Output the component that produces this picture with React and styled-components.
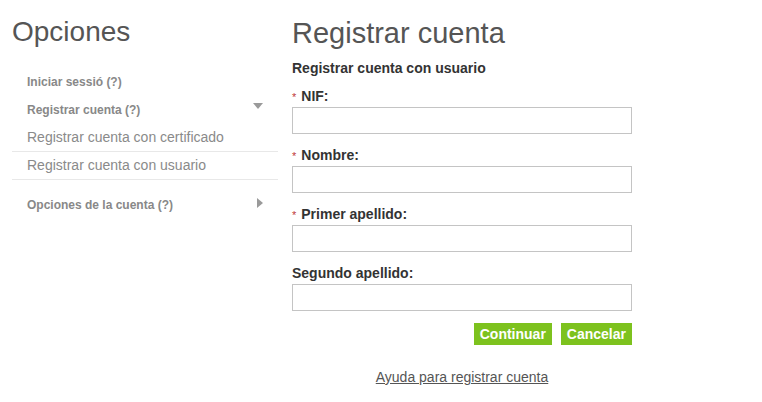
import React from "react";
import styled, { createGlobalStyle } from "styled-components";

const GlobalStyle = createGlobalStyle`
  body {
    margin: 0;
    background: #ffffff;
    font-family: "Liberation Sans", Arial, sans-serif;
  }
`;

const Page = styled.div`
  display: flex;
  align-items: flex-start;
  gap: 14px;
  padding: 16px 0 0 12px;
  height: 402px;
  box-sizing: border-box;
`;

const Sidebar = styled.aside`
  width: 266px;
`;

const PageTitle = styled.h1`
  margin: 0;
  font-weight: 400;
  font-size: ${(p) => p.size || 28}px;
  line-height: ${(p) => p.lh || 32}px;
  color: #555555;
`;

const Menu = styled.ul`
  list-style: none;
  margin: 20px 0 0;
  padding: 0;
`;

const MenuItem = styled.li`
  display: flex;
  justify-content: space-between;
  align-items: flex-start;
  padding: 0 15px;
  height: 28px;
  margin-top: ${(p) => p.offset || 0}px;
  font-size: 12px;
  font-weight: 700;
  line-height: 28px;
  color: #888888;
  cursor: pointer;
`;

const SubItem = styled.li`
  padding: 0 15px;
  height: 27px;
  line-height: 27px;
  font-size: 14px;
  color: #8a8a8a;
  border-bottom: 1px solid #e8e8e8;
  cursor: pointer;
`;

const Caret = styled.svg`
  margin-top: 7px;
  fill: #9a9a9a;
  flex-shrink: 0;
`;

const Main = styled.main`
  width: 340px;
`;

const Subtitle = styled.h2`
  margin: 8px 0 7px;
  font-size: 14px;
  font-weight: 700;
  line-height: 20px;
  color: #333333;
`;

const Field = styled.div`
  margin-bottom: 10px;
`;

const Label = styled.label`
  display: block;
  height: 22px;
  font-size: 14px;
  font-weight: 700;
  line-height: 22px;
  color: #333333;
`;

const Required = styled.span`
  color: #c0393b;
  font-size: 11px;
  font-weight: 400;
  line-height: 0;
  margin-right: 5px;
`;

const Input = styled.input`
  display: block;
  width: 340px;
  height: 27px;
  box-sizing: border-box;
  margin: 0;
  border: 1px solid #c4c4c4;
  background: #ffffff;
  font-family: inherit;
  font-size: 13px;
  outline: none;
`;

const Actions = styled.div`
  display: flex;
  justify-content: flex-end;
  gap: 9px;
  margin-top: 12px;
`;

const Button = styled.button`
  height: 22px;
  padding: 0 6px;
  border: none;
  background: #7dc21e;
  color: #ffffff;
  font-family: inherit;
  font-size: 14px;
  font-weight: 700;
  line-height: 22px;
  cursor: pointer;
`;

const HelpLink = styled.a`
  display: block;
  margin-top: 22px;
  text-align: center;
  font-size: 14px;
  line-height: 20px;
  color: #555555;
  text-decoration: underline;
`;

const fields = [
  { label: "NIF:", required: true },
  { label: "Nombre:", required: true },
  { label: "Primer apellido:", required: true },
  { label: "Segundo apellido:", required: false },
];

const App = () => {
  return (
    <>
      <GlobalStyle />
      <Page>
        <Sidebar>
          <PageTitle>Opciones</PageTitle>
          <Menu>
            <MenuItem>
              <span>Iniciar sessió (?)</span>
            </MenuItem>
            <MenuItem>
              <span>Registrar cuenta (?)</span>
              <Caret width="10" height="6" viewBox="0 0 10 6">
                <polygon points="0,0 10,0 5,6" />
              </Caret>
            </MenuItem>
            <SubItem>Registrar cuenta con certificado</SubItem>
            <SubItem>Registrar cuenta con usuario</SubItem>
            <MenuItem offset={11}>
              <span>Opciones de la cuenta (?)</span>
              <Caret width="6" height="10" viewBox="0 0 6 10">
                <polygon points="0,0 6,5 0,10" />
              </Caret>
            </MenuItem>
          </Menu>
        </Sidebar>
        <Main>
          <PageTitle size={29} lh={34}>
            Registrar cuenta
          </PageTitle>
          <Subtitle>Registrar cuenta con usuario</Subtitle>
          {fields.map((f) => (
            <Field key={f.label}>
              <Label>
                {f.required && <Required>*</Required>}
                {f.label}
              </Label>
              <Input type="text" />
            </Field>
          ))}
          <Actions>
            <Button>Continuar</Button>
            <Button>Cancelar</Button>
          </Actions>
          <HelpLink href="#">Ayuda para registrar cuenta</HelpLink>
        </Main>
      </Page>
    </>
  );
};

export default App;
